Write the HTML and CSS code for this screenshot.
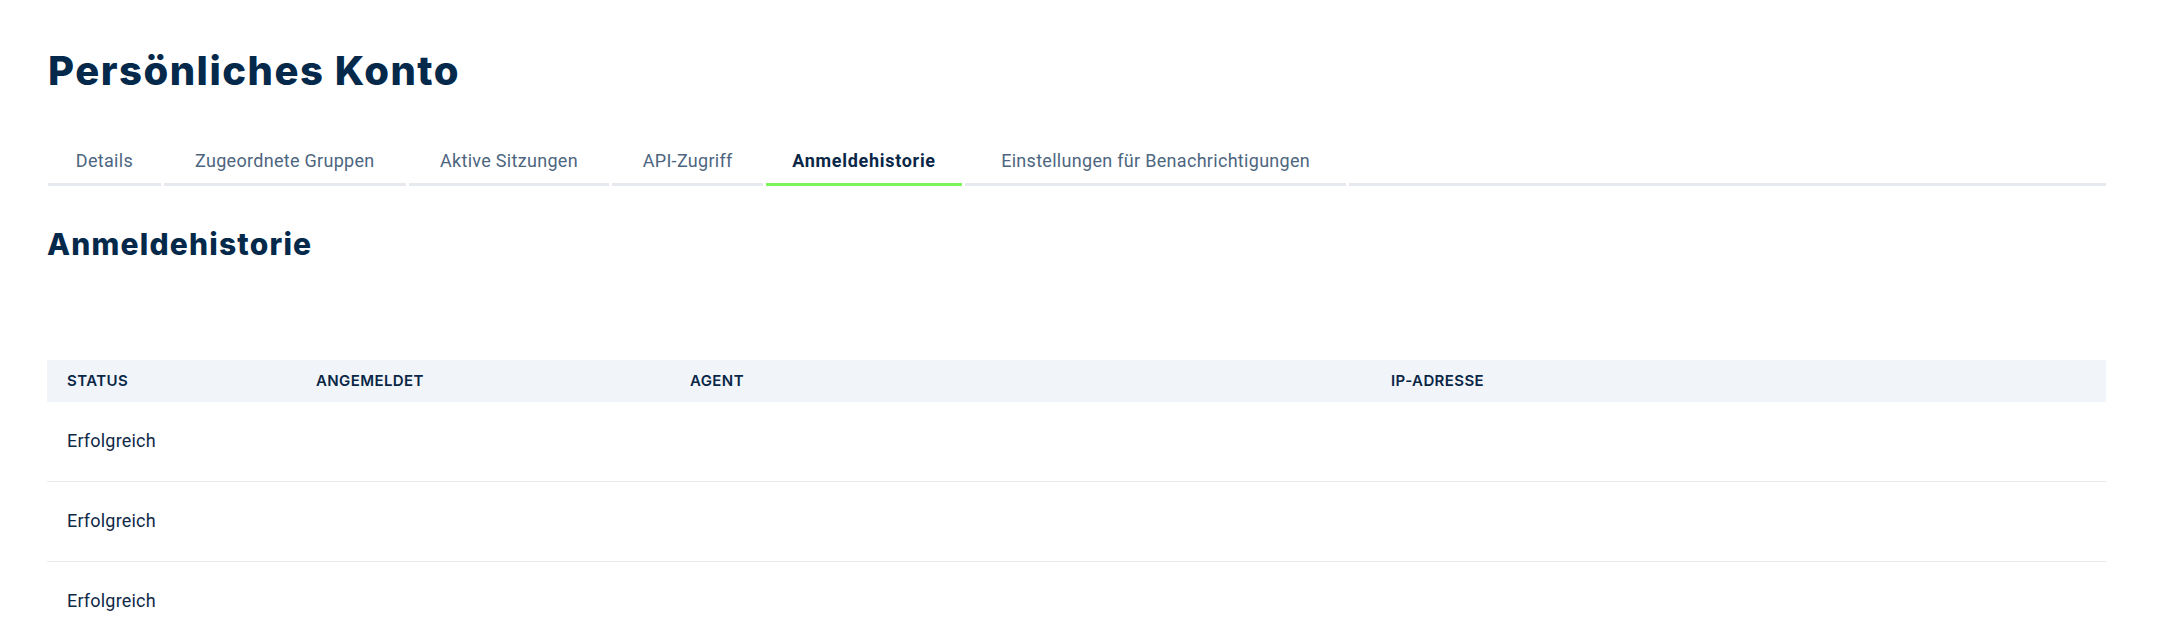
FILE: index.html
```html
<!DOCTYPE html>
<html lang="de">
<head>
<meta charset="utf-8">
<title>Persönliches Konto</title>
<link rel="stylesheet" href="styles.css">
</head>
<body>
<main class="page">
  <h1 class="page-title">Persönliches Konto</h1>

  <nav class="tabs">
    <a class="tab" href="#" data-label="Details">Details</a>
    <a class="tab" href="#" data-label="Zugeordnete Gruppen">Zugeordnete Gruppen</a>
    <a class="tab" href="#" data-label="Aktive Sitzungen">Aktive Sitzungen</a>
    <a class="tab" href="#" data-label="API-Zugriff">API-Zugriff</a>
    <a class="tab tab-active" href="#" data-label="Anmeldehistorie">Anmeldehistorie</a>
    <a class="tab" href="#" data-label="Einstellungen für Benachrichtigungen">Einstellungen für Benachrichtigungen</a>
    <span class="tab-fill"></span>
  </nav>

  <h2 class="section-title">Anmeldehistorie</h2>

  <table class="history">
    <colgroup>
      <col class="col-status">
      <col class="col-login">
      <col class="col-agent">
      <col class="col-ip">
    </colgroup>
    <thead>
      <tr>
        <th>Status</th>
        <th>Angemeldet</th>
        <th>Agent</th>
        <th>IP-Adresse</th>
      </tr>
    </thead>
    <tbody>
      <tr><td>Erfolgreich</td><td></td><td></td><td></td></tr>
      <tr><td>Erfolgreich</td><td></td><td></td><td></td></tr>
      <tr><td>Erfolgreich</td><td></td><td></td><td></td></tr>
    </tbody>
  </table>
</main>
</body>
</html>
```

FILE: styles.css
```css
html, body {
  margin: 0;
  padding: 0;
  background: #ffffff;
}

body {
  font-family: Roboto, "Liberation Sans", sans-serif;
  color: #0c2a48;
}

.page {
  padding: 0 53px 0 47px;
}

.page-title {
  margin: 47px 0 44px 1px;
  font-family: Inter, "Liberation Sans", sans-serif;
  font-weight: 800;
  font-size: 40px;
  line-height: 48px;
  letter-spacing: 1.5px;
  color: #05294b;
}

/* tab strip */
.tabs {
  display: flex;
  gap: 3px;
  margin-left: 1px;
}

.tab {
  display: inline-flex;
  flex-direction: column;
  align-items: center;
  padding: 10px 26px;
  font-size: 18px;
  line-height: 24px;
  letter-spacing: 0.3px;
  color: #4d6680;
  text-decoration: none;
  border-bottom: 3px solid #e6eaef;
}

/* reserve the bold width so tabs don't shift when activated */
.tab::after {
  content: attr(data-label);
  height: 0;
  overflow: hidden;
  visibility: hidden;
  font-weight: 700;
  letter-spacing: 0.7px;
}

.tab-active {
  font-weight: 700;
  letter-spacing: 0.7px;
  color: #0a2747;
  border-bottom-color: #7cf55a;
}

.tab-fill {
  flex: 1;
  border-bottom: 3px solid #e6eaef;
}

.section-title {
  margin: 40px 0 98px;
  font-family: Inter, "Liberation Sans", sans-serif;
  font-weight: 800;
  font-size: 30px;
  line-height: 36px;
  letter-spacing: 1.2px;
  color: #05294b;
}

/* login history table */
.history {
  width: 100%;
  border-collapse: collapse;
  table-layout: fixed;
}

.col-status { width: 249px; }
.col-login { width: 374px; }
.col-agent { width: 701px; }
.col-ip { width: auto; }

.history th {
  padding: 12px 20px;
  background: #f1f5f9;
  font-family: Inter, "Liberation Sans", sans-serif;
  font-weight: 600;
  font-size: 15px;
  line-height: 18px;
  letter-spacing: 0.4px;
  text-transform: uppercase;
  text-align: left;
  color: #0a2747;
}

.history td {
  padding: 27px 20px 28px;
  font-size: 18px;
  line-height: 24px;
  letter-spacing: 0.2px;
  color: #0f2a46;
  border-bottom: 1px solid #e9e9e9;
}
```
